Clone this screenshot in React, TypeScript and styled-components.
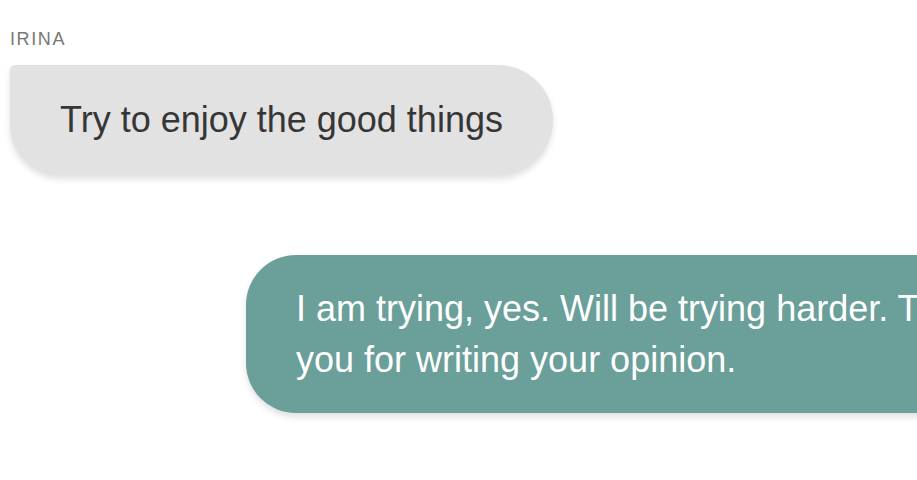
import { FC } from 'react';
import styled, { createGlobalStyle } from 'styled-components';

const GlobalStyle = createGlobalStyle`
  html, body {
    margin: 0;
    padding: 0;
    background: #ffffff;
    overflow: hidden;
  }

  body {
    font-family: 'Liberation Sans', Arial, sans-serif;
  }
`;

const Thread = styled.div`
  width: 100%;
  height: 480px;
  padding: 31px 0 0 10px;
  box-sizing: border-box;

  display: flex;
  flex-direction: column;
`;

const Author = styled.div`
  font-size: 18px;
  line-height: 16px;
  letter-spacing: 1.6px;
  color: #777777;
  margin-bottom: 18px;
`;

const Group = styled.div<{ $outgoing?: boolean }>`
  display: flex;
  flex-direction: column;
  align-items: flex-start;
  margin-left: ${({ $outgoing }) => ($outgoing ? '236px' : '0')};
  margin-top: ${({ $outgoing }) => ($outgoing ? '80px' : '0')};
`;

const Bubble = styled.div<{ $outgoing?: boolean }>`
  box-sizing: border-box;
  flex-shrink: 0;
  padding: ${({ $outgoing }) => ($outgoing ? '28px 50px' : '29px 50px')};
  font-size: 36px;
  line-height: ${({ $outgoing }) => ($outgoing ? '51px' : '52px')};
  color: ${({ $outgoing }) => ($outgoing ? '#ffffff' : '#363636')};
  background: ${({ $outgoing }) => ($outgoing ? '#6a9f9a' : '#e2e2e2')};
  border-radius: ${({ $outgoing }) => ($outgoing ? '50px' : '5px 55px 55px 50px')};
  box-shadow: 0 4px 6px rgba(0, 0, 0, 0.12);
  width: ${({ $outgoing }) => ($outgoing ? '820px' : 'auto')};
`;

interface Message {
  id: number;
  author?: string;
  text: string;
  outgoing?: boolean;
}

const messages: Message[] = [
  { id: 1, author: 'IRINA', text: 'Try to enjoy the good things' },
  {
    id: 2,
    text: 'I am trying, yes. Will be trying harder. Thank you for writing your opinion.',
    outgoing: true,
  },
];

const App: FC = () => (
  <>
    <GlobalStyle />
    <Thread>
      {messages.map((message) => (
        <Group key={message.id} $outgoing={message.outgoing}>
          {message.author && <Author>{message.author}</Author>}
          <Bubble $outgoing={message.outgoing}>{message.text}</Bubble>
        </Group>
      ))}
    </Thread>
  </>
);

export default App;
